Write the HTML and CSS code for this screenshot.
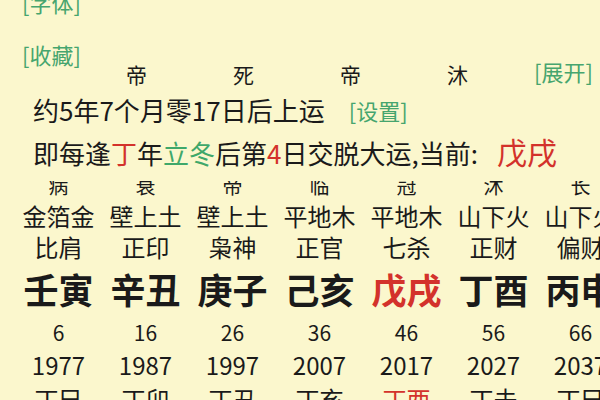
FILE: index.html
```html
<!DOCTYPE html>
<html lang="zh-CN">
<head>
    <meta charset="UTF-8">
    <meta name="viewport" content="width=device-width, initial-scale=1.0">
    <title>大运</title>
    <link rel="stylesheet" href="styles.css">
</head>
<body>
    <div class="page">
        <div class="link font-link">[字体]</div>
        <div class="link fav-link">[收藏]</div>

        <div class="state-row">
            <span>帝</span>
            <span>死</span>
            <span>帝</span>
            <span>沐</span>
            <span class="link more">[展开]</span>
        </div>

        <div class="start-line">
            约5年7个月零17日后上运<span class="link">[设置]</span>
        </div>
        <div class="rule-line">
            即每逢<span class="red">丁</span>年<span class="green">立冬</span>后第<span class="red">4</span>日交脱大运,当前:<span class="red current">戊戌</span>
        </div>

        <!-- 大运表 -->
        <div class="grid clip-row">
            <span>病</span><span>衰</span><span>帝</span><span>临</span><span>冠</span><span>沐</span><span>长</span>
        </div>
        <div class="grid nayin-row">
            <span>金箔金</span><span>壁上土</span><span>壁上土</span><span>平地木</span><span>平地木</span><span>山下火</span><span>山下火</span>
        </div>
        <div class="grid god-row">
            <span>比肩</span><span>正印</span><span>枭神</span><span>正官</span><span>七杀</span><span>正财</span><span>偏财</span>
        </div>
        <div class="grid pillar-row">
            <span>壬寅</span><span>辛丑</span><span>庚子</span><span>己亥</span><span class="red">戊戌</span><span>丁酉</span><span>丙申</span>
        </div>
        <div class="grid age-row">
            <span>6</span><span>16</span><span>26</span><span>36</span><span>46</span><span>56</span><span>66</span>
        </div>
        <div class="grid year-row">
            <span>1977</span><span>1987</span><span>1997</span><span>2007</span><span>2017</span><span>2027</span><span>2037</span>
        </div>
        <div class="grid liu-row">
            <span>丁巳</span><span>丁卯</span><span>丁丑</span><span>丁亥</span><span class="red">丁酉</span><span>丁未</span><span>丁巳</span>
        </div>
    </div>
</body>
</html>
```

FILE: styles.css
```css
* {
    margin: 0;
    padding: 0;
    box-sizing: border-box;
}

body {
    width: 600px;
    height: 400px;
    overflow: hidden;
    background-color: #fbf7cd;
    color: #1a1a1a;
    font-family: "Noto Sans CJK SC", "Noto Sans", sans-serif;
}

.page {
    display: flex;
    flex-direction: column;
}

.link {
    color: #46a56e;
    font-size: 22px;
    white-space: nowrap;
}

.red {
    color: #d3322b;
}

.green {
    color: #3fa86a;
}

/* top links */
.font-link {
    margin-top: -11px;
    margin-left: 22px;
    line-height: 26px;
}

.fav-link {
    margin-top: 26px;
    margin-left: 22px;
    line-height: 26px;
}

.state-row {
    display: flex;
    align-items: center;
    height: 20px;
    margin-top: -3px;
    padding-left: 126px;
    font-size: 21px;
}

.state-row span {
    width: 107px;
    flex-shrink: 0;
}

.state-row .more {
    width: auto;
    margin-left: -20px;
    position: relative;
    top: -3px;
}

.start-line {
    margin-top: 12px;
    padding-left: 33px;
    font-size: 26px;
    line-height: 28px;
    white-space: nowrap;
}

.start-line .link {
    margin-left: 24px;
    position: relative;
    top: -1px;
}

.rule-line {
    margin-top: 12px;
    padding-left: 33px;
    font-size: 26px;
    line-height: 28px;
    white-space: nowrap;
}

.rule-line .current {
    font-size: 30px;
    margin-left: 19px;
}

/* table */
.grid {
    display: grid;
    grid-template-columns: repeat(7, 87px);
    margin-left: 15px;
    text-align: center;
    white-space: nowrap;
}

.clip-row {
    margin-top: 14px;
    height: 15px;
    overflow: hidden;
    font-size: 20px;
    line-height: 9px;
}

.nayin-row {
    margin-top: 8px;
    font-size: 24px;
    line-height: 24px;
}

.god-row {
    margin-top: 7px;
    font-size: 24px;
    line-height: 24px;
}

.pillar-row {
    margin-top: 12px;
    font-size: 35px;
    font-weight: 700;
    line-height: 36px;
}

.age-row {
    margin-top: 14px;
    font-size: 21px;
    line-height: 22px;
}

.year-row {
    margin-top: 9px;
    font-size: 24px;
    line-height: 26px;
}

.liu-row {
    margin-top: 8px;
    font-size: 24px;
    line-height: 26px;
}
```
